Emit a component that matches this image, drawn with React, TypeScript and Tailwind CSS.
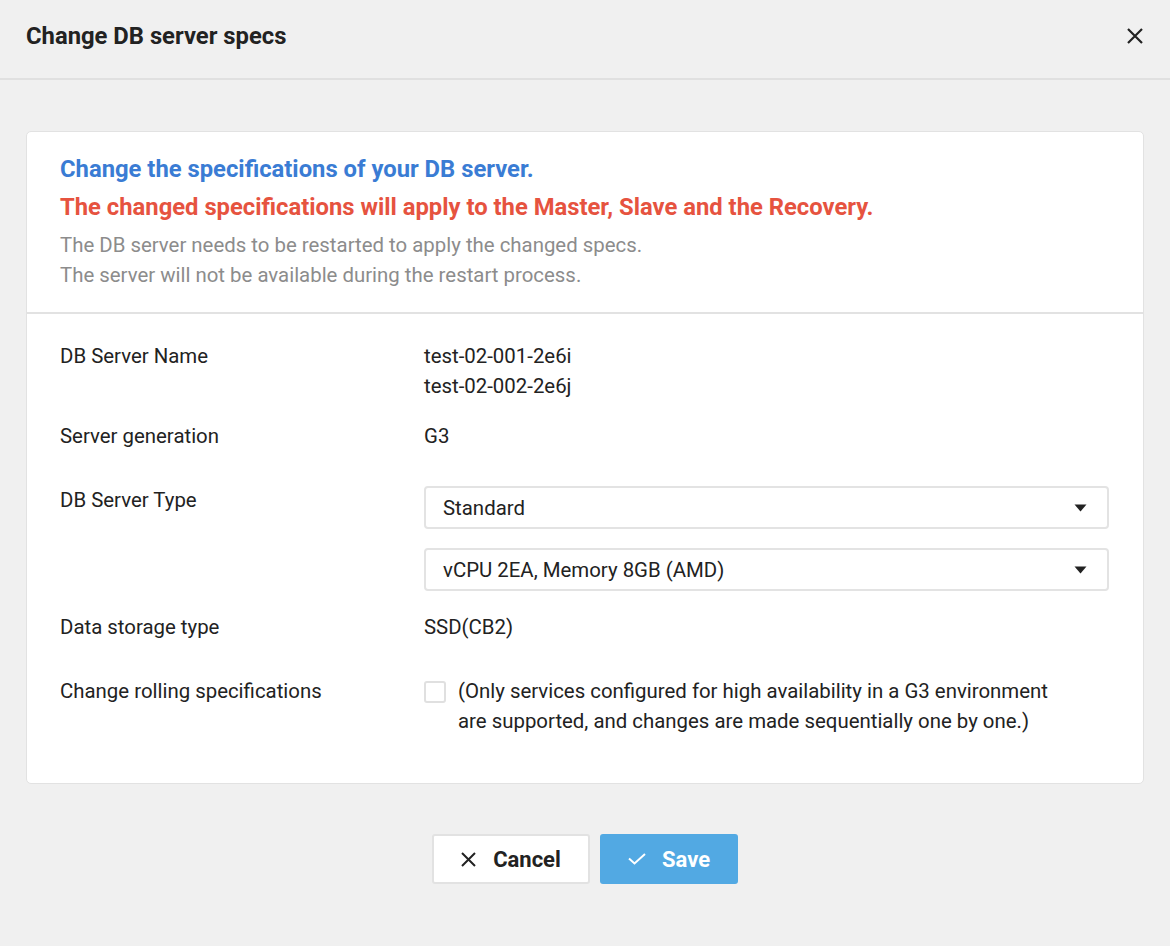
import React from "react";

const font = { fontFamily: "Roboto, 'Noto Sans', sans-serif" };

function Caret() {
  return (
    <svg width="13" height="8" viewBox="0 0 13 8" className="shrink-0">
      <path d="M0.5 0.5 L12.5 0.5 L6.5 7.5 Z" fill="#222" />
    </svg>
  );
}

function Select({ value }: { value: string }) {
  return (
    <div className="flex h-[43px] w-[685px] items-center justify-between rounded-[4px] border-2 border-[#e3e3e3] bg-white pl-[17px] pr-[20px] text-[20.4px] text-[#222]">
      <span>{value}</span>
      <Caret />
    </div>
  );
}

export default function App() {
  return (
    <div className="min-h-[946px] w-[1170px] bg-[#f0f0f0]" style={font}>
      <div className="flex h-[80px] items-start justify-between border-b-2 border-[#e0e0e0] pl-[26px] pr-[27px] pt-[21px]">
        <h1 className="text-[23.8px] font-bold leading-[30px] text-[#222]">Change DB server specs</h1>
        <svg width="16" height="16" viewBox="0 0 16 16" className="mt-[7px]">
          <path d="M1 1 L15 15 M15 1 L1 15" stroke="#222" strokeWidth="2.2" />
        </svg>
      </div>
      <div className="px-[26px] pt-[51px]">
        <div className="rounded-[5px] border border-[#e2e2e2] bg-white">
          <div className="border-b-2 border-[#e2e2e2] px-[33px] pt-[22px] pb-[22px]">
            <p className="text-[23.8px] font-bold leading-[30px] text-[#3a7cd4]">
              Change the specifications of your DB server.
            </p>
            <p className="mt-[8px] text-[23.8px] font-bold leading-[30px] text-[#e6533f]">
              The changed specifications will apply to the Master, Slave and the Recovery.
            </p>
            <p className="mt-[8px] text-[20.4px] leading-[30px] text-[#8c8c8c]">
              The DB server needs to be restarted to apply the changed specs.
              <br />
              The server will not be available during the restart process.
            </p>
          </div>
          <div className="px-[33px] pt-[27px] pb-[47px] text-[20.4px] leading-[30px] text-[#222]">
            <div className="flex">
              <div className="w-[364px]">DB Server Name</div>
              <div>
                <div>test-02-001-2e6i</div>
                <div>test-02-002-2e6j</div>
              </div>
            </div>
            <div className="mt-[20px] flex">
              <div className="w-[364px]">Server generation</div>
              <div>G3</div>
            </div>
            <div className="mt-[34px] flex">
              <div className="w-[364px]">DB Server Type</div>
              <div className="mt-[1px] flex flex-col gap-[19px]">
                <Select value="Standard" />
                <Select value="vCPU 2EA, Memory 8GB (AMD)" />
              </div>
            </div>
            <div className="mt-[21px] flex">
              <div className="w-[364px]">Data storage type</div>
              <div>SSD(CB2)</div>
            </div>
            <div className="mt-[34px] flex">
              <div className="w-[364px]">Change rolling specifications</div>
              <div className="flex">
                <div className="mt-[5px] h-[22px] w-[22px] shrink-0 rounded-[3px] border-2 border-[#e0e0e0] bg-white" />
                <div className="ml-[12px]">
                  (Only services configured for high availability in a G3 environment
                  <br />
                  are supported, and changes are made sequentially one by one.)
                </div>
              </div>
            </div>
          </div>
        </div>
        <div className="mt-[50px] flex justify-center gap-[10px]">
          <button className="flex h-[50px] w-[158px] items-center justify-center gap-[17px] rounded-[3px] border-2 border-[#e2e2e2] bg-white text-[22px] font-bold text-[#222]">
            <svg width="15" height="15" viewBox="0 0 15 15">
              <path d="M1 1 L14 14 M14 1 L1 14" stroke="#222" strokeWidth="2" />
            </svg>
            Cancel
          </button>
          <button className="flex h-[50px] w-[138px] items-center justify-center gap-[16px] rounded-[3px] bg-[#52a9e3] text-[22px] font-bold text-white">
            <svg width="18" height="12" viewBox="0 0 18 12">
              <path d="M1 5.5 L6.5 10.5 L17 1" stroke="#fff" strokeWidth="2" fill="none" />
            </svg>
            Save
          </button>
        </div>
      </div>
    </div>
  );
}
